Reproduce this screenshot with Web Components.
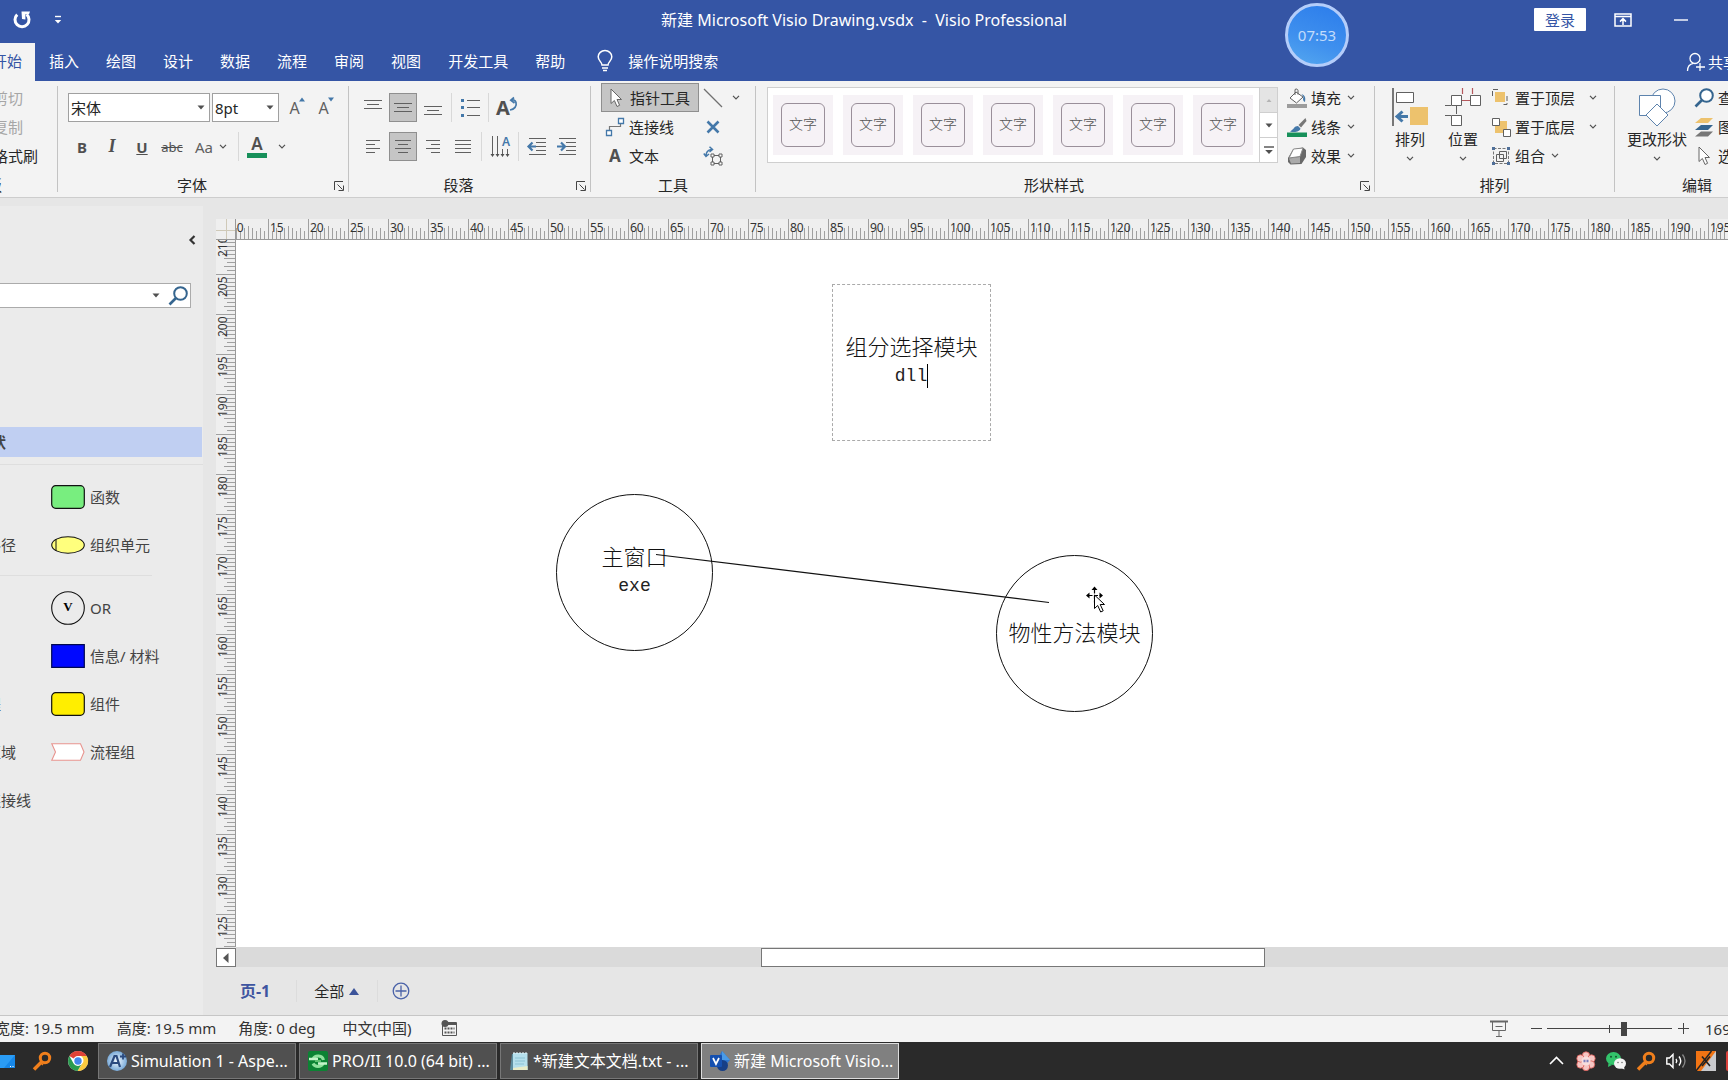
<!DOCTYPE html>
<html lang="zh-CN">
<head>
<meta charset="utf-8">
<meta name="viewport" content="width=device-width, initial-scale=1">
<title>新建 Microsoft Visio Drawing.vsdx - Visio Professional</title>
<style>
  body { margin: 0; overflow: hidden; font: 15px/20px "Noto Sans", "Noto Sans CJK SC", sans-serif; color: #262626; }
</style>
</head>
<body>
<visio-app></visio-app>

<script>
const ICONS = {
  undo: ['0 0 20 20', '<path d="M5.2 4.6A7 7 0 1 0 14.6 4.4" fill="none" stroke="#fff" stroke-width="3"/><path d="M9.5 1.5h8.5l-1 2.8h-3.6V9.5l-3.4-.4z" fill="#fff"/>'],
  qat: ['0 0 8 10', '<path d="M1 1.5h6" stroke="#fff" stroke-width="1.4"/><path d="M0.8 5h6.4L4 8.6z" fill="#fff"/>'],
  bulb: ['0 0 16 22', '<path d="M5 15c0-3-3.8-4-3.8-8.2a6.8 6.3 0 0 1 13.6 0C14.800 11 11 12 11 15zM5 18h6M6 20.500h4" fill="none" stroke="#fff" stroke-width="1.5"/>'],
  ribbonopts: ['0 0 18 14', '<path d="M1 1h16v12H1zM1 3.500h16M9 12V6M6 8.600 9 5.600l3 3" fill="none" stroke="#fff" stroke-width="1.5"/>'],
  minimize: ['0 0 14 4', '<path d="M0 2h14" stroke="#fff" stroke-width="1.4"/>'],
  share: ['0 0 20 20', '<circle cx="9" cy="6.500" r="5" fill="none" stroke="#fff" stroke-width="1.3"/><path d="M1.500 19c0-4 2.500-7 6-7.600M14 11v8M10 15h9" fill="none" stroke="#fff" stroke-width="1.3"/>'],
  caret: ['0 0 8 5', '<path d="M.5.5h7L4 4.500z" fill="#505050"/>'],
  caretup: ['0 0 8 5', '<path d="M1.500 4h5L4 1z" fill="#b4b4b4"/>'],
  more: ['0 0 10 9', '<path d="M0 1h10" stroke="#505050" stroke-width="1.400"/><path d="M1.200 4h7.600L5 8z" fill="#505050"/>'],
  chev: ['0 0 8 5', '<path d="M1 .8 4 3.800 7 .8" fill="none" stroke="#505050" stroke-width="1.200"/>'],
  pup: ['0 0 6 5', '<path d="M0 4.500h6L3 .5z" fill="#4478a9"/>'],
  pdown: ['0 0 6 5', '<path d="M0 .5h6L3 4.500z" fill="#4478a9"/>'],
  top: ['0 0 20 20', '<path d="M1 2.500h18M4 6.500h12M1 10.500h18" stroke="#606060"/>'],
  middle: ['0 0 20 20', '<path d="M1 5.500h18M4 9.500h12M1 13.500h18" stroke="#606060"/>'],
  bottom: ['0 0 20 20', '<path d="M1 8.500h18M4 12.500h12M1 16.500h18" stroke="#606060"/>'],
  left: ['0 0 20 20', '<path d="M3 3.500h14M3 7.500h9M3 11.500h14M3 15.500h9" stroke="#606060"/>'],
  center: ['0 0 20 20', '<path d="M2 3.500h16M5 7.500h10M2 11.500h16M5 15.500h10" stroke="#606060"/>'],
  right: ['0 0 20 20', '<path d="M3 3.500h14M8 7.500h9M3 11.500h14M8 15.500h9" stroke="#606060"/>'],
  justify: ['0 0 20 20', '<path d="M2 3.500h16M2 7.500h16M2 11.500h16M2 15.500h16" stroke="#606060"/>'],
  bullets: ['0 0 20 20', '<path d="M7 2.500h13M7 9.500h13M7 17.500h13" stroke="#606060"/><path d="M1 1h3v3H1zM1 8h3v3H1zM1 16h3v3H1z" fill="#4478a9"/>'],
  rotate: ['0 0 9 14', '<path d="M1 13c4.500-.5 7-4 6-7.500C6.300 3 4.500 2.500 3 3.200M5 .5 1.800 3.300l3.700 2.700" fill="none" stroke="#4478a9" stroke-width="1.700"/>'],
  textdir: ['0 0 20 22', '<path d="M2.500 0v20M7.500 0v20M12.500 13v7M17.500 13v7" stroke="#606060"/><path d="m.5 18 2 3 2-3zM5.500 18l2 3 2-3zM10.500 18l2 3 2-3zM15.500 18l2 3 2-3z" fill="#505050"/>'],
  outdent: ['0 0 20 20', '<path d="M2 1.500h17M9 5.500h10M9 9.500h10M9 13.500h10M2 17.500h17" stroke="#606060"/><path d="M9 9.500H2M5.500 5.500l-4 4 4 4" stroke="#4478a9" stroke-width="2.200" fill="none"/>'],
  indent: ['0 0 20 20', '<path d="M2 1.500h17M9 5.500h10M9 9.500h10M9 13.500h10M2 17.500h17" stroke="#606060"/><path d="M0 9.500h7M4 5.500l4 4-4 4" stroke="#4478a9" stroke-width="2.200" fill="none"/>'],
  launcher: ['0 0 10 10', '<path d="M.5 9V.5H9M3.500 3.500l5 5M9.500 4.500v5H4.500" fill="none" stroke="#444"/>'],
  pointer: ['0 0 20 20', '<path d="M5 1v14.500l3.400-3 2.600 6 2.600-1.200-2.600-5.800h4.500z" fill="#fff" stroke="#666"/>'],
  connector: ['0 0 20 20', '<path d="M4.500 13V9.500h11V7" fill="none" stroke="#777" stroke-width="1.200"/><path d="M13.500 1.500h5v5h-5zM1.500 13.500h5v5h-5z" fill="#fff" stroke="#4478a9" stroke-width="1.300"/>'],
  line: ['0 0 20 20', '<path d="m1 1 18 18" stroke="#707070" stroke-width="1.200"/>'],
  cross: ['0 0 20 20', '<path d="m4.500 4.500 11 11M15.500 4.500l-11 11" stroke="#4478a9" stroke-width="2.600"/>'],
  textblock: ['0 0 20 20', '<path d="M9.500 9.500h8v8h-8z" fill="none" stroke="#606060"/><path d="M8 8h3v3H8zM16 8h3v3h-3zM8 16h3v3H8zM16 16h3v3h-3z" fill="#fff" stroke="#606060"/><path d="M3 10c0-4 2-6 5.500-6.500M.8 7.500 3 10.500l3-2.500M6.500.8l3 2.700-3 2.500" fill="none" stroke="#4478a9" stroke-width="1.500"/>'],
  fill: ['0 0 20 20', '<path d="M0 16h20v4H0z" fill="#9c9c9c"/><path d="m9 4-6 6 6.500 5L16 9z" fill="#fff" stroke="#606060"/><path d="M8 7V1.500c1.500-1.200 3 0 3 1v4" fill="none" stroke="#606060"/><path d="M14.500 6c3 1 4.500 3 3.500 8-2-.5-2.500-3-1.500-5z" fill="#4478a9"/>'],
  stroke: ['0 0 20 20', '<path d="M0 15.500h20V20H0z" fill="#17905a"/><path d="m18.500 1-7 7 2.500 2.500L19.500 4z" fill="#777"/><path d="M11 9c-4 0-3.500 3-8 5.500 5 1.500 10 0 10.500-3z" fill="#4478a9"/>'],
  effect: ['0 0 20 20', '<path d="M6 3.500 16 1.500l3 2.500v7l-4.500 7-11 .5L1 16v-4z" fill="#686868"/><path d="M6.500 3 16 2l-3 8.500-11 1.500z" fill="#fff" stroke="#888"/><path d="M2 12.500l11-1.500v6l-9 .5z" fill="#aaa"/>'],
  align: ['0 0 38 38', '<path d="M2 0v38" stroke="#777" stroke-width="2"/><path d="M5.500 4.500h17v10h-17z" fill="#fff" stroke="#606060"/><path d="M19 19h18v18H19z" fill="#edc26d"/><path d="M17 28.500H7M11.500 23.500l-5.500 5 5.500 5" fill="none" stroke="#4478a9" stroke-width="3"/>'],
  position: ['0 0 38 38', '<path d="M18.500 0v6M28.500 0v6M17 12.500h10" stroke="#b5585c" stroke-width="1.200"/><path d="M1 17.500h6M1 27.500h6M12.500 17v9" stroke="#606060"/><path d="M7.500 7.500h10v10h-10zM26.500 7.500h10v10h-10zM7.500 27.500h10v10h-10z" fill="#fff" stroke="#606060"/>'],
  front: ['0 0 20 20', '<path d="M1.500 8V1.500h6M16 8v8.500h-5" fill="none" stroke="#606060" stroke-dasharray="5 2"/><path d="M4 4h10v10H4z" fill="#edc26d"/>'],
  back: ['0 0 20 20', '<path d="M4 4h12v12H4z" fill="#edc26d"/><path d="M1.500 1.500h7v7h-7zM12.500 12.500h7v7h-7z" fill="#fff" stroke="#606060"/>'],
  group: ['0 0 20 20', '<path d="M2.500 2.500h15v15h-15z" fill="none" stroke="#777" stroke-dasharray="3 1.500"/><path d="M5.500 8.500h7v7h-7zM8.500 5.500h7v7h-7z" fill="none" stroke="#606060"/><path d="M1 1h3v3H1zM16 1h3v3h-3zM1 16h3v3H1zM16 16h3v3h-3z" fill="#4f6f99"/>'],
  change: ['0 0 38 38', '<circle cx="25" cy="13" r="12" fill="#fff" stroke="#5d83ad"/><path d="M1.500 7.500h21v20h-21z" fill="#fff" stroke="#5d83ad"/><path d="m19 16 11 11-11 11L8 27z" fill="#fff" stroke="#5d83ad"/>'],
  find: ['0 0 20 20', '<circle cx="12.500" cy="7.500" r="6.300" fill="#fff" stroke="#35658f" stroke-width="2"/><path d="M8 12 1.500 18.500" stroke="#35658f" stroke-width="2.600"/>'],
  layers: ['0 0 20 20', '<path d="M7 1h12l-5 5H1z" fill="#edc26d"/><path d="M7 8h12l-5 5H1z" fill="#35658f"/><path d="M7 14.500h12l-5 5H1z" fill="#777"/>'],
  collapse: ['0 0 8 12', '<path d="M6.500 2 2.500 6l4 4" fill="none" stroke="#333" stroke-width="2.200"/>'],
  scrollleft: ['0 0 8 10', '<path d="M6.500 0v10L1 5z" fill="#555"/>'],
  tri: ['0 0 10 7', '<path d="M0 7h10L5 0z" fill="#3c549a"/>'],
  add: ['0 0 18 18', '<circle cx="9" cy="9" r="7.800" fill="none" stroke="#4a62a8" stroke-width="1.300"/><path d="M9 3.500v11M3.500 9h11" stroke="#4a62a8" stroke-width="1.300"/>'],
  macro: ['0 0 16 16', '<path d="M1.500 3v12.500h14V2.500H6" fill="none" stroke="#555"/><path d="M6 2h9v3H6z" fill="#555"/><circle cx="4" cy="3.500" r="3.500" fill="#555"/><path d="M3.500 8.500h10M3.500 12.500h10" stroke="#555" stroke-width="2" stroke-dasharray="2 1"/>'],
  present: ['0 0 18 18', '<path d="M0 1.500h18" stroke="#666" stroke-width="2"/><path d="M2.500 2v8.500h13V2M5.500 6.500h7M9 11v5M6 16.500h6" fill="none" stroke="#666"/>'],
  minus: ['0 0 11 11', '<path d="M0 5.500h11" stroke="#444"/>'],
  plus: ['0 0 11 11', '<path d="M0 5.500h11M5.500 0v11" stroke="#444"/>'],
  desktop: ['0 0 20 20', '<path d="M0 4h20v13H0z" fill="#1687e8"/><path d="M0 4h20L9 17H0z" fill="#2a9cf5"/><path d="M15 15.500h1M17.500 15.500h1" stroke="#fff"/>'],
  magnify: ['0 0 20 20', '<circle cx="13" cy="7" r="4.700" fill="none" stroke="#f07f1c" stroke-width="3"/><path d="m10 10.500-8 8" stroke="#f07f1c" stroke-width="3.400"/><path d="m8 11 3 3" stroke="#f07f1c" stroke-width="1.500"/>'],
  chrome: ['0 0 20 20', '<circle cx="10" cy="10" r="10" fill="#fff"/><path d="M10 0a10 10 0 0 1 8.700 5H10a5 5 0 0 0-4.400 2.500L1.400 5A10 10 0 0 1 10 0z" fill="#e04237"/><path d="M18.700 5A10 10 0 0 1 9.500 20l4.800-7.400A5 5 0 0 0 13 5z" fill="#fcca3f"/><path d="M1.400 5A10 10 0 0 0 9.500 20l4.300-7.200a5 5 0 0 1-8.200-.3z" fill="#2a9b4f"/><circle cx="10" cy="10" r="4.700" fill="#fff"/><circle cx="10" cy="10" r="3.700" fill="#4186ea"/>'],
  aspen: ['0 0 20 20', '<defs><radialGradient id="g"><stop offset="0" stop-color="#f2f8fd"/><stop offset="1" stop-color="#79aad8"/></radialGradient></defs><circle cx="10" cy="10" r="10" fill="url(#g)"/><path d="m3 16 4.500-11h2l3.500 11M5 12h7" fill="none" stroke="#2b4a7e" stroke-width="2.200"/><path d="M13 5.500h6M16 2.500v6" stroke="#2b4a7e" stroke-width="1.800"/>'],
  proii: ['0 0 20 20', '<rect width="20" height="20" rx="2" fill="#0c8233"/><path d="M5 8a5.500 5 0 0 1 10.500 1M15 12.500a5.500 5 0 0 1-10 0" fill="none" stroke="#8fe09c" stroke-width="3"/><path d="M1 8h9M10 12.500h9" stroke="#c5f3ca" stroke-width="2.500"/><path d="M7 10h6" stroke="#5cc070" stroke-width="2"/>'],
  notepad: ['0 0 20 20', '<path d="M3 3h14l2 16H1z" fill="#5d8e9f"/><path d="M4 2h14.500v17H4z" fill="#b5e0ec"/><path d="M4 19h14.500v-4L4 17z" fill="#e9edc8"/><path d="M5 3V1M8 3V1M11 3V1M14 3V1M17 3V1" stroke="#e8f5f8"/><path d="M6 7h10M6 10h10M6 13h9" stroke="#8cc3d4"/>'],
  visio: ['0 0 20 20', '<path d="m12 0 8 9-8 9-6-8z" fill="#2f78d0"/><path d="m12 0 8 9h-8z" fill="#4a9be8"/><circle cx="12.500" cy="14.500" r="5.500" fill="#173f86"/><rect y="4" width="12" height="12" rx="1" fill="#1550b0"/><path d="M3 7l3 6 3-6" fill="none" stroke="#fff" stroke-width="1.700"/>'],
  trayup: ['0 0 20 20', '<path d="m4 13 6.500-6.500L17 13" fill="none" stroke="#fff" stroke-width="1.600"/>'],
  flower: ['0 0 20 20', '<g fill="#f5c6c3" stroke="#dc5a55" stroke-width=".8"><circle cx="10" cy="4.500" r="3.700"/><circle cx="15.500" cy="7.500" r="3.700"/><circle cx="15" cy="13.500" r="3.700"/><circle cx="10" cy="16" r="3.700"/><circle cx="4.500" cy="13.500" r="3.700"/><circle cx="4.500" cy="7.500" r="3.700"/></g><circle cx="10" cy="10" r="4.500" fill="#f8dedd"/><path d="M7.500 10h5" stroke="#7b7fbd" stroke-width="2.500" stroke-dasharray="2 1"/>'],
  wechat: ['0 0 20 20', '<ellipse cx="7.500" cy="7.500" rx="7.500" ry="6.500" fill="#33c36b"/><path d="m2.500 12-.5 4 4-2z" fill="#33c36b"/><ellipse cx="14" cy="12.500" rx="6" ry="5.200" fill="#f4f4f4"/><path d="m15 17 3.500 1.500-.5-3z" fill="#f4f4f4"/><circle cx="5" cy="5.800" r="1" fill="#17532f"/><circle cx="10" cy="5.800" r="1" fill="#17532f"/><circle cx="12" cy="11.500" r=".8" fill="#777"/><circle cx="16" cy="11.500" r=".8" fill="#777"/>'],
  speaker: ['0 0 20 20', '<path d="M.8 7h2.700l3.500-3.500v13L3.500 13H.8z" fill="none" stroke="#fff" stroke-width="1.400"/><path d="M10 8q1.500 2 0 4M13 5.500q3.500 4.500 0 9" fill="none" stroke="#fff" stroke-width="1.400"/><path d="M16.500 3.500q5 6.500 0 13" fill="none" stroke="#888" stroke-width="1.300"/>'],
  xapp: ['0 0 20 20', '<path d="M0 0h20v20H0z" fill="#f27413"/><path d="M20 0v20H5z" fill="#c9cacd"/><path d="M15.500 0 0 20" stroke="#242424" stroke-width="1.500"/><path d="M6 5.500 14 15M14 5.500 6 15" stroke="#222" stroke-width="1.600"/>'],
  redapp: ['0 0 20 20', '<rect width="20" height="20" rx="2" fill="#d9403a"/>'],
  s_function: ['0 0 34 24', '<rect x=".7" y=".7" width="32.600" height="22.600" rx="4" fill="#78ee7f" stroke="#111" stroke-width="1.200"/>'],
  s_org: ['0 0 34 18', '<ellipse cx="17" cy="9" rx="16.300" ry="8.300" fill="#ffff7d" stroke="#111" stroke-width="1.100"/><path d="M5 3v12" stroke="#111"/>'],
  s_or: ['0 0 34 34', '<circle cx="17" cy="17" r="16.300" fill="none" stroke="#111" stroke-width="1.100"/><text x="17" y="20" text-anchor="middle" font-family="Liberation Serif, serif" font-size="13" font-weight="700" fill="#000">V</text>'],
  s_info: ['0 0 34 24', '<path d="M.7.7h32.600v22.600H.7z" fill="#0008ff" stroke="#000850" stroke-width="1.200"/>'],
  s_comp: ['0 0 34 24', '<rect x=".7" y=".7" width="32.600" height="22.600" rx="4" fill="#ffee00" stroke="#111" stroke-width="1.200"/>'],
  s_group: ['0 0 34 18', '<path d="M.8.8h28.700L33 9l-3.500 8.200H.8L4.500 9z" fill="#fff" stroke="#e8948f" stroke-width="1.100"/>'],
  movecursor: ['0 0 24 30', '<path d="M10.500 4.500v13M4.500 10.500h13" stroke="#000" stroke-width="1.200" stroke-dasharray="4 1.500"/><path d="m7.500 5 3-3.500 3 3.500zM5.500 7.500 2 10.500l3.500 3zM15.500 7.500l3.500 3-3.500 3z" fill="#000"/><path d="M10.500 10v13.500l3.200-3 3 6.500 2.500-1.200-3-6.300h4.300z" fill="#fff" stroke="#000"/>']
};

function define(name, css, html, after) {
  const t = document.createElement('template');
  t.innerHTML = `<style>*{box-sizing:border-box}button{font:inherit;color:inherit;background:none;border:0;padding:0;margin:0;white-space:nowrap}${css}</style>${html}`;
  customElements.define(name, class extends HTMLElement {
    constructor() {
      super();
      this.attachShadow({ mode: 'open' }).append(t.content.cloneNode(true));
    }
    connectedCallback() { if (after) after(this, this.shadowRoot); }
  });
}

define('ui-icon', ':host{display:block;flex:none}svg{display:block;overflow:visible}', '', (el, root) => {
  if (root.querySelector('svg')) return;
  const [box, body] = ICONS[el.getAttribute('name')];
  const [, , w, h] = box.split(' ');
  root.innerHTML += `<svg viewBox="${box}" width="${w}" height="${h}" aria-hidden="true">${body}</svg>`;
});

/* small square ribbon button: an icon or slotted letters */
define('icon-button', `
  :host{display:block;flex:none;width:28px;height:29px}
  button{width:100%;height:100%;display:flex;align-items:center;justify-content:center;gap:6px}
  :host([pressed]) button{background:#c5c5c5;border:1px solid #8f8f8f}
  :host([tight]) button{gap:0}
  :host([wide]){width:46px}
  :host([narrow]){width:18px}
`, '<button><slot></slot></button>', (el, root) =>
  root.querySelector('button').setAttribute('aria-label', el.getAttribute('label')));

/* ribbon row button: icon, text, optional chevron */
define('tool-button', `
  :host{display:block;flex:none;height:29px}
  button{height:29px;width:100%;display:flex;align-items:center;gap:4px}
  :host([pressed]) button{background:#c5c5c5;border:1px solid #8f8f8f}
  :host([inset]) button{padding:0 4px}
  :host([disabled]) button{color:#a6a6a6}
  .end{display:none;margin-left:2px}
  :host([menu]) .end{display:block}
  :host([menu=far]) .end{margin-left:10px}
`, '<button><slot name="icon"></slot><slot></slot><ui-icon class="end" name="chev"></ui-icon></button>');

define('big-button', `
  :host{display:block;flex:none;width:50px}
  :host([wide]){width:68px}
  button{width:100%;display:flex;flex-direction:column;align-items:center;padding-top:5px}
  .t{margin-top:3px}
  .end{margin-top:7px}
`, '<button><slot name="icon"></slot><span class="t"><slot></slot></span><ui-icon class="end" name="chev"></ui-icon></button>');

define('ribbon-group', `
  :host{display:flex;flex-direction:column;flex:none;padding-top:2px}
  .body{height:87px;display:flex;flex:none}
  .foot{height:27px;padding-top:2px;display:flex;align-items:center}
  .name{flex:1;text-align:center;white-space:nowrap}
  .launch{display:none;width:22px;height:20px;align-items:center;justify-content:flex-end;padding:2px 4px 0 0}
  :host([launcher]) .launch{display:flex}
`, '<div class="body"><slot></slot></div><div class="foot"><span class="name"><slot name="name"></slot></span><button class="launch" aria-label="更多选项"><ui-icon name="launcher"></ui-icon></button></div>');

define('title-bar', `
  :host{display:grid;grid-template-columns:1fr auto 1fr;align-items:center;height:43px;background:#3555a5;color:#fff;position:relative}
  .quick{display:flex;align-items:center;gap:22px;padding:0 0 4px 12px}
  .name{white-space:pre;font-size:16px;padding-bottom:4px}
  .win{display:flex;align-items:center;justify-content:flex-end;padding:0 40px 4px 0}
  .login{width:52px;height:23px;background:#fff;color:#3555a5;border-radius:1px;margin-right:28px}
  .opts{margin-right:42px}
  .timer{position:absolute;right:379px;top:3px;width:64px;height:64px;border-radius:50%;border:3px solid #b4cdfa;
    background:linear-gradient(200deg,#2b7ceb,#3f90ee 60%,#55a8ef);display:flex;align-items:center;justify-content:center;font-size:15px;color:#c3dcfb;z-index:1}
`, `<div class="quick"><button aria-label="恢复"><ui-icon name="undo"></ui-icon></button><button aria-label="自定义快速访问工具栏"><ui-icon name="qat"></ui-icon></button></div>
<span class="name">新建 Microsoft Visio Drawing.vsdx  -  Visio Professional</span>
<div class="win"><button class="login">登录</button><button class="opts" aria-label="功能区显示选项"><ui-icon name="ribbonopts"></ui-icon></button><button aria-label="最小化"><ui-icon name="minimize"></ui-icon></button></div>
<div class="timer">07:53</div>`);

define('ribbon-tabs', `
  :host{display:flex;height:38px;background:#3555a5;color:#fff;overflow:hidden}
  nav{display:flex;gap:1px;margin-left:-21px}
  a{display:flex;align-items:center;padding:0 13px 3px;color:inherit;text-decoration:none;white-space:nowrap}
  a.on{background:#f3f3f3;color:#3555a5}
  .tell{display:flex;align-items:center;gap:15px;margin-left:19px;padding-bottom:2px}
  .share{display:flex;align-items:center;gap:2px;margin-left:auto;width:42px;overflow:hidden;padding-bottom:1px}
`, `<nav><a class="on" href="#">开始</a><a href="#">插入</a><a href="#">绘图</a><a href="#">设计</a><a href="#">数据</a><a href="#">流程</a><a href="#">审阅</a><a href="#">视图</a><a href="#">开发工具</a><a href="#">帮助</a></nav>
<button class="tell"><ui-icon name="bulb"></ui-icon>操作说明搜索</button>
<button class="share"><ui-icon name="share"></ui-icon>共享</button>`);

define('combo-box', `
  :host{display:grid;flex:none;height:29px;background:#fff;border:1px solid #a0a0a0;align-items:center}
  select,ui-icon{grid-area:1/1}
  select{appearance:none;border:0;background:none;font:inherit;color:inherit;padding:0 2px;width:100%;height:27px}
  ui-icon{justify-self:end;margin-right:4px;pointer-events:none}
`, '<select></select><ui-icon name="caret"></ui-icon>', (el, root) => {
  const s = root.querySelector('select');
  s.setAttribute('aria-label', el.getAttribute('label'));
  s.innerHTML = `<option>${el.getAttribute('value')}</option>`;
});

define('style-gallery', `
  :host{display:flex;flex:none;height:76px;margin:4px 0 0 11px;background:#fff;border:1px solid #cfcfcf}
  .items{display:flex;align-items:center;gap:10px;padding:0 6px 0 5px}
  .items button{width:60px;height:60px;background:#f6f2f6;display:grid;place-items:center}
  .items span{width:44px;height:44px;border:1px solid #9a8f9a;border-radius:6px;font-size:14px;font-weight:300;line-height:40px;text-align:center;color:#555}
  .nav{display:flex;flex-direction:column;width:18px;border-left:1px solid #cfcfcf}
  .nav button{flex:1;display:grid;place-items:center}
  .nav button+button{border-top:1px solid #cfcfcf}
  .nav button:first-child{background:#e4e4e4}
`, `<div class="items"></div><div class="nav"><button aria-label="向上"><ui-icon name="caretup"></ui-icon></button><button aria-label="向下"><ui-icon name="caret"></ui-icon></button><button aria-label="其他"><ui-icon name="more"></ui-icon></button></div>`,
(el, root) => { root.querySelector('.items').innerHTML = '<button><span>文字</span></button>'.repeat(7); });

define('ribbon-bar', `
  :host{display:flex;height:117px;background:#f3f3f3;border-bottom:1px solid #cdcdcd;overflow:hidden}
  i.v{flex:none;width:1px;background:#c3c3c3;margin:5px 0}
  i.s{flex:none;width:1px;height:29px;background:#d8d8d8;margin:0 2px}
  .rows{display:flex;flex-direction:column;gap:10px;padding-top:10px}
  .row{display:flex;gap:2px;align-items:center;height:29px}
  .col{display:flex;flex-direction:column}
  .clip{width:57px}.clip .col{margin-left:-7px}.clip .nm{display:block;text-align:left;margin-left:-43px}
  .font{width:290px;padding-left:10px}
  .font [slot=name],.para [slot=name]{padding-right:10px}
  .sizes{display:flex;gap:1px;margin-left:2px}
  .para{width:241px;padding-left:10px}
  .tools{width:164px;padding-left:10px;padding-right:10px}
  .shape{width:618px}
  .shape .col{margin-left:9px}
  .arr{width:239px}
  .arr big-button{margin-right:3px}
  .arr big-button:first-child{margin-left:10px}
  .edit{width:164px}
  .edit big-button{margin-left:8px}
  .edit .col{margin-left:3px}
  b{font-weight:700;color:#505050}
  .it{font:italic 700 18px "Liberation Serif",serif;color:#505050}
  .st{font-size:13px;color:#505050;text-decoration:line-through}
  .aa{color:#606060}
  .big{font-size:16px;color:#606060}
  .fc{display:block;border-bottom:5px solid #17905a;width:20px;text-align:center;line-height:18px;font-size:17px;font-weight:600;color:#505050}
  .ra{font-size:20px}
  .td{display:grid;justify-items:end}
  .td>*{grid-area:1/1}
  .td span{font-size:12px;line-height:12px;color:#4478a9;font-weight:600}
  .gA{width:20px;text-align:center;font-size:17px}
  .lift{align-self:flex-start;margin-top:4px;margin-left:-1px}
`, `
<ribbon-group class="clip"><div class="col"><tool-button disabled>剪切</tool-button><tool-button disabled>复制</tool-button><tool-button>格式刷</tool-button></div><span slot="name" class="nm">剪贴板</span></ribbon-group><i class="v"></i>
<ribbon-group class="font" launcher><div class="rows">
  <div class="row"><combo-box label="字体" value="宋体" style="width:142px"></combo-box><combo-box label="字号" value="8pt" style="width:67px"></combo-box>
    <span class="sizes"><icon-button tight label="增大字号"><span class="big">A</span><ui-icon class="lift" name="pup"></ui-icon></icon-button><icon-button tight label="减小字号"><span class="big">A</span><ui-icon class="lift" name="pdown"></ui-icon></icon-button></span></div>
  <div class="row"><icon-button label="加粗"><b>B</b></icon-button><icon-button label="倾斜"><span class="it">I</span></icon-button><icon-button label="下划线"><b style="text-decoration:underline">U</b></icon-button><icon-button label="删除线"><span class="st">abc</span></icon-button><icon-button wide label="更改大小写"><span class="aa">Aa</span><ui-icon name="chev"></ui-icon></icon-button><i class="s"></i><icon-button label="字体颜色"><span class="fc">A</span></icon-button><icon-button narrow label="颜色选项"><ui-icon name="chev"></ui-icon></icon-button></div>
</div><span slot="name">字体</span></ribbon-group><i class="v"></i>
<ribbon-group class="para" launcher><div class="rows">
  <div class="row"><icon-button label="顶端对齐"><ui-icon name="top"></ui-icon></icon-button><icon-button pressed label="中部对齐"><ui-icon name="middle"></ui-icon></icon-button><icon-button label="底端对齐"><ui-icon name="bottom"></ui-icon></icon-button><i class="s"></i><icon-button label="项目符号"><ui-icon name="bullets"></ui-icon></icon-button><i class="s"></i><icon-button tight label="旋转文本"><b class="ra">A</b><ui-icon class="lift" name="rotate"></ui-icon></icon-button></div>
  <div class="row"><icon-button label="左对齐"><ui-icon name="left"></ui-icon></icon-button><icon-button pressed label="居中"><ui-icon name="center"></ui-icon></icon-button><icon-button label="右对齐"><ui-icon name="right"></ui-icon></icon-button><icon-button label="两端对齐"><ui-icon name="justify"></ui-icon></icon-button><i class="s"></i><icon-button label="文字方向"><span class="td"><ui-icon name="textdir"></ui-icon><span>A</span></span></icon-button><i class="s"></i><icon-button label="减少缩进"><ui-icon name="outdent"></ui-icon></icon-button><icon-button label="增加缩进"><ui-icon name="indent"></ui-icon></icon-button></div>
</div><span slot="name">段落</span></ribbon-group><i class="v"></i>
<ribbon-group class="tools">
  <div class="col"><tool-button inset pressed><ui-icon slot="icon" name="pointer"></ui-icon>指针工具&nbsp;</tool-button><tool-button inset><ui-icon slot="icon" name="connector"></ui-icon>连接线</tool-button><tool-button inset><b slot="icon" class="gA">A</b>文本</tool-button></div>
  <div class="col"><icon-button label="线条"><ui-icon name="line"></ui-icon></icon-button><icon-button label="连接点"><ui-icon name="cross"></ui-icon></icon-button><icon-button label="文本块"><ui-icon name="textblock"></ui-icon></icon-button></div>
  <icon-button narrow label="绘图工具"><ui-icon name="chev"></ui-icon></icon-button>
  <span slot="name">工具</span></ribbon-group><i class="v"></i>
<ribbon-group class="shape" launcher><style-gallery></style-gallery>
  <div class="col"><tool-button menu><ui-icon slot="icon" name="fill"></ui-icon>填充</tool-button><tool-button menu><ui-icon slot="icon" name="stroke"></ui-icon>线条</tool-button><tool-button menu><ui-icon slot="icon" name="effect"></ui-icon>效果</tool-button></div>
  <span slot="name">形状样式</span></ribbon-group><i class="v"></i>
<ribbon-group class="arr"><big-button><ui-icon slot="icon" name="align"></ui-icon>排列</big-button><big-button><ui-icon slot="icon" name="position"></ui-icon>位置</big-button>
  <div class="col"><tool-button menu="far"><ui-icon slot="icon" name="front"></ui-icon>置于顶层</tool-button><tool-button menu="far"><ui-icon slot="icon" name="back"></ui-icon>置于底层</tool-button><tool-button menu><ui-icon slot="icon" name="group"></ui-icon>组合</tool-button></div>
  <span slot="name">排列</span></ribbon-group><i class="v"></i>
<ribbon-group class="edit"><big-button wide><ui-icon slot="icon" name="change"></ui-icon>更改形状</big-button>
  <div class="col"><tool-button><ui-icon slot="icon" name="find"></ui-icon>查找</tool-button><tool-button><ui-icon slot="icon" name="layers"></ui-icon>图层</tool-button><tool-button><ui-icon slot="icon" name="pointer"></ui-icon>选择</tool-button></div>
  <span slot="name">编辑</span></ribbon-group>`);

define('stencil-item', `
  :host{display:flex;align-items:center;gap:5px;height:48px;white-space:nowrap;color:#444}
`, '<slot name="icon"></slot><span><slot></slot></span>');

define('shape-pane', `
  :host{display:block;flex:none;width:203px;margin-top:8px;background:#ebebeb;overflow:hidden}
  header{height:68px;margin-bottom:9px;display:flex;align-items:center;justify-content:flex-end;padding-right:7px}
  .search{display:flex;align-items:center;width:191px;height:25px;background:#fff;border:1px solid #ababab;border-left:0;padding-right:2px;gap:8px}
  input{flex:1;min-width:0;height:22px;border:0;outline:0;background:none;font:inherit}
  .set{height:30px;margin:119px 1px 7px 0;background:#c0cff2;display:flex;align-items:center;font-weight:700;color:#444}
  .set span{margin-left:-24px}
  hr{border:0;height:1px;background:#dedede;margin:0}
  .list{display:grid;grid-template-columns:95px auto;margin:8px 0 6px -44px}
  .list+hr{width:152px}
  .list stencil-item{grid-column:2}
  .list stencil-item.l{grid-column:1}
`, `<header><button aria-label="折叠形状窗格"><ui-icon name="collapse"></ui-icon></button></header>
<div class="search"><input aria-label="搜索形状"><ui-icon name="caret"></ui-icon><button aria-label="搜索"><ui-icon name="find"></ui-icon></button></div>
<div class="set"><span>形状</span></div><hr>
<div class="list"><stencil-item><ui-icon slot="icon" name="s_function"></ui-icon>函数</stencil-item>
<stencil-item class="l">进程路径</stencil-item><stencil-item><ui-icon slot="icon" name="s_org"></ui-icon>组织单元</stencil-item></div><hr>
<div class="list"><stencil-item><ui-icon slot="icon" name="s_or"></ui-icon>OR</stencil-item>
<stencil-item><ui-icon slot="icon" name="s_info"></ui-icon>信息/ 材料</stencil-item>
<stencil-item class="l">主流程</stencil-item><stencil-item><ui-icon slot="icon" name="s_comp"></ui-icon>组件</stencil-item>
<stencil-item class="l">企业区域</stencil-item><stencil-item><ui-icon slot="icon" name="s_group"></ui-icon>流程组</stencil-item>
<stencil-item class="l">动态连接线</stencil-item></div>`);

/* ruler: five units per 40px cell, ticks drawn as tiled gradients */
define('ruler-strip', `
  :host{--c:#a0a0a0;display:block;overflow:hidden;font-size:12px;color:#333}
  .in{display:flex}
  .in span{flex:none}
  :host([axis=x]){border-bottom:1px solid #999;
    background:linear-gradient(90deg,var(--c) 1px,#0000 1px) -8px 100%/40px 20px repeat-x,
      linear-gradient(90deg,var(--c) 1px,#0000 1px) 12px 100%/40px 13px repeat-x,
      linear-gradient(90deg,var(--c) 1px,#0000 1px) 0 100%/8px 11px repeat-x,
      linear-gradient(90deg,var(--c) 1px,#0000 1px) 0 100%/4px 8px repeat-x,#efefef}
  :host([axis=x]) .in{margin-left:-8px}
  :host([axis=x]) span{width:40px;padding-left:2px;line-height:18px}
  :host([axis=y]){border-right:1px solid #999;
    background:linear-gradient(var(--c) 1px,#0000 1px) 100% -6px/20px 40px repeat-y,
      linear-gradient(var(--c) 1px,#0000 1px) 100% 14px/13px 40px repeat-y,
      linear-gradient(var(--c) 1px,#0000 1px) 100% 2px/11px 8px repeat-y,
      linear-gradient(var(--c) 1px,#0000 1px) 100% 2px/8px 4px repeat-y,#efefef}
  :host([axis=y]) .in{flex-direction:column;margin-top:-6px}
  :host([axis=y]) span{height:40px;width:14px;line-height:14px;writing-mode:vertical-rl;transform:rotate(180deg);text-align:end;padding-bottom:2px}
`, '<div class="in"></div>', (el, root) => {
  const from = +el.getAttribute('from'), to = +el.getAttribute('to');
  const step = from < to ? 5 : -5;
  let out = '';
  for (let v = from; v !== to + step; v += step) out += `<span>${v}</span>`;
  root.querySelector('.in').innerHTML = out;
});

define('diagram-node', `
  :host{position:absolute;width:157px;height:157px;display:flex;flex-direction:column;align-items:center;justify-content:center;
    padding-bottom:5px;box-sizing:border-box;
    border:1px solid #111;border-radius:50%;color:#111;font:300 22px/28px "Noto Sans CJK SC",sans-serif;white-space:nowrap}
  :host([editing]){width:159px;border:1px dashed #aaa;border-radius:0}
`, '<slot></slot>');

define('page-canvas', `
  :host{display:block;position:relative;background:#fff;overflow:hidden}
  .en{font:400 18px/28px "Liberation Mono",monospace;display:flex;padding-top:3px;color:#222}
  .caret{width:1px;height:24px;background:#000;align-self:center}
  svg{position:absolute;inset:0;width:100%;height:100%}
  .cur{position:absolute;left:848px;top:345px}
`, `<diagram-node style="left:320px;top:254px"><span>主窗口</span><span class="en">exe</span></diagram-node>
<diagram-node style="left:760px;top:315px"><span>物性方法模块</span></diagram-node>
<diagram-node editing style="left:596px;top:44px"><span>组分选择模块</span><span class="en">dll<i class="caret"></i></span></diagram-node>
<svg aria-hidden="true"><path d="M420 314.500 813 362.500" stroke="#111" stroke-width="1.200"/></svg>
<ui-icon class="cur" name="movecursor"></ui-icon>`);

define('drawing-window', `
  :host{flex:1;min-width:0;display:grid;grid-template-columns:20px 1fr;grid-template-rows:21px 1fr 20px 48px;padding:21px 0 0 13px}
  .corner{background:linear-gradient(#cfc9b8,#cfc9b8) 10px 0/1px 100% no-repeat,linear-gradient(#cfc9b8,#cfc9b8) 0 11px/100% 1px no-repeat,#efefef;border-right:1px solid #999;border-bottom:1px solid #999}
  .sb{height:19px;align-self:end;background:#fff;border:1px solid #777;display:grid;place-items:center}
  .track{background:#dadada;display:flex;padding:1px 0 0}
  .track i{flex:none;margin-left:35.200%;width:33.800%;background:#fff;border:1px solid #777}
  .tabs{grid-column:1/3;display:flex;align-items:center;padding-left:24px}
  .page{font-weight:700;font-size:16px;color:#3e55a0}
  .tabs i{width:1px;height:22px;background:#dcdcdc}
  .all{display:flex;align-items:center;gap:5px;margin:0 18px 0 17px}
  .tabs .page{margin-right:26px}
  .add{margin-left:14px}
`, `<div class="corner"></div><ruler-strip axis="x" from="10" to="195"></ruler-strip>
<ruler-strip axis="y" from="210" to="125"></ruler-strip><page-canvas></page-canvas>
<button class="sb" aria-label="向左滚动"><ui-icon name="scrollleft"></ui-icon></button><div class="track"><i></i></div>
<div class="tabs"><button class="page">页-1</button><i></i><button class="all">全部<ui-icon name="tri"></ui-icon></button><i></i><button class="add" aria-label="插入页"><ui-icon name="add"></ui-icon></button></div>`);

define('status-bar', `
  :host{display:flex;align-items:center;height:27px;background:#f3f3f3;border-top:1px solid #c6c6c6;white-space:nowrap;overflow:hidden;color:#333}
  .l{display:flex;align-items:center;gap:22px;margin-left:-5px;padding-bottom:2px}
  .l .lang{padding:0 7px 0 5px}
  .r{margin-left:auto;display:flex;align-items:center;width:238px;flex:none;padding-bottom:1px}
  .r>*{flex:none}
  input{appearance:none;width:125px;height:16px;margin:0 6px 0 5px;background:linear-gradient(#444,#444) 50% 50%/1px 8px no-repeat,linear-gradient(#444,#444) 0 50%/100% 1px no-repeat}
  input::-webkit-slider-thumb{appearance:none;width:6px;height:14px;background:#444}
  .p{margin-right:23px}
  .z{margin-left:16px}
`, `<div class="l"><span>宽度: 19.5 mm</span><span>高度: 19.5 mm</span><span>角度: 0 deg</span><span class="lang">中文(中国)</span><ui-icon name="macro"></ui-icon></div>
<div class="r"><button class="p" aria-label="演示模式"><ui-icon name="present"></ui-icon></button><button aria-label="缩小"><ui-icon name="minus"></ui-icon></button><input type="range" aria-label="缩放" min="0" max="100" value="62"><button aria-label="放大"><ui-icon name="plus"></ui-icon></button><span class="z">169%</span></div>`);

define('task-bar', `
  :host{display:flex;align-items:center;height:38px;background:#2a2a2a;color:#fff;font-size:16px;overflow:hidden}
  .pins{display:flex;gap:16px;width:98px;flex:none}
  .pins button:first-child{width:15px;display:flex;justify-content:flex-end;overflow:hidden;margin-right:1px}
  .apps{display:flex;gap:3px}
  .apps button{width:198px;height:36px;background:#505050;border:1px solid #777;display:flex;align-items:center;gap:4px;padding:0 8px;text-align:left}
  .apps button.on{background:#808080;border-color:#ddd}
  .tray{display:flex;gap:10px;margin-left:auto;width:182px;flex:none;overflow:hidden}
`, `<div class="pins"><button aria-label="桌面"><ui-icon name="desktop"></ui-icon></button><button aria-label="Everything"><ui-icon name="magnify"></ui-icon></button><button aria-label="Chrome"><ui-icon name="chrome"></ui-icon></button></div>
<div class="apps"><button><ui-icon name="aspen"></ui-icon>Simulation 1 - Aspe...</button><button><ui-icon name="proii"></ui-icon>PRO/II 10.0 (64 bit) ...</button><button><ui-icon name="notepad"></ui-icon>*新建文本文档.txt - ...</button><button class="on"><ui-icon name="visio"></ui-icon>新建 Microsoft Visio...</button></div>
<div class="tray"><ui-icon name="trayup"></ui-icon><ui-icon name="flower"></ui-icon><ui-icon name="wechat"></ui-icon><ui-icon name="magnify"></ui-icon><ui-icon name="speaker"></ui-icon><ui-icon name="xapp"></ui-icon><ui-icon name="redapp"></ui-icon></div>`);

define('visio-app', `
  :host{display:flex;flex-direction:column;height:100vh;background:#e6e6e6;overflow:hidden}
  title-bar,ribbon-tabs,ribbon-bar,status-bar,task-bar{flex:none}
  main{flex:1;min-height:0;display:flex}
`, '<title-bar></title-bar><ribbon-tabs></ribbon-tabs><ribbon-bar></ribbon-bar><main><shape-pane></shape-pane><drawing-window></drawing-window></main><status-bar></status-bar><task-bar></task-bar>');
</script>
</body>
</html>
